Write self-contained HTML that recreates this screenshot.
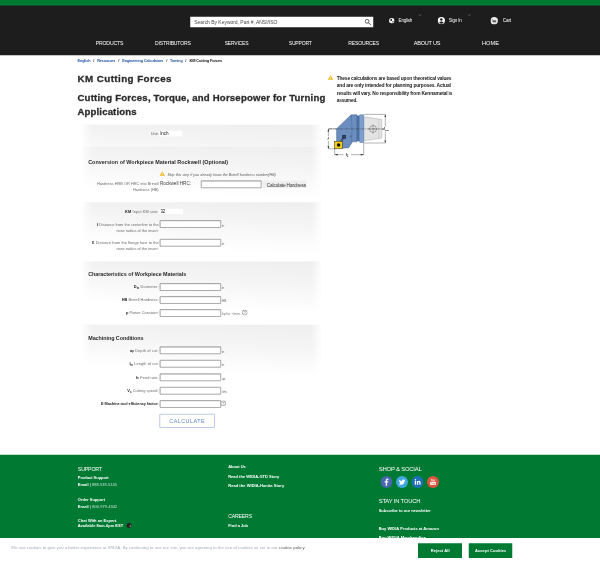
<!DOCTYPE html>
<html><head><meta charset="utf-8"><title>KM Cutting Forces</title>
<style>
html,body{margin:0;padding:0;background:#fff;}
body{width:600px;height:564px;overflow:hidden;font-family:"Liberation Sans",sans-serif;}
#page{position:relative;width:600px;height:564px;overflow:hidden;zoom:4;transform:scale(0.25);transform-origin:0 0;}
#wrap{position:relative;width:600px;height:564px;overflow:hidden;will-change:transform;}
.t{position:absolute;white-space:nowrap;line-height:1;transform:translateY(-50%);}
.t sub{font-size:70%;vertical-align:baseline;position:relative;top:0.25em;line-height:0;}
.t sup{font-size:70%;vertical-align:baseline;position:relative;top:-0.35em;line-height:0;}
.b{position:absolute;box-sizing:border-box;}
.panel{position:absolute;left:83.3px;width:237px;background:linear-gradient(to right,rgba(255,255,255,.75) 0,rgba(255,255,255,0) 9px) 0 0/237px 100% no-repeat,linear-gradient(to left,rgba(255,255,255,.85) 0,rgba(255,255,255,0) 9px) 0 0/237px 100% no-repeat,linear-gradient(183deg,#eeeeee 0%,#f3f3f3 30%,#f9f9f9 58%,#ffffff 86%) 0 0/237px 50px no-repeat;}
.inp{position:absolute;box-sizing:border-box;height:7.5px;background:#fff;border:0.5px solid #5c5c5c;border-radius:0.6px;box-shadow:inset 0.35px 0.35px 0 0.1px #bdbdbd,inset -0.3px -0.3px 0 0 #e2e2e2;}
.sel{position:absolute;background:#fff;}
.soc{position:absolute;width:12px;height:12px;border-radius:50%;}

</style></head>
<body>
<div id="wrap"><div id="page">
<!-- header -->
<div class="b" style="left:0;top:0;width:600px;height:55.35px;background:#1d1d1d"></div>
<div class="b" style="left:0;top:0;width:600px;height:5.4px;background:#007a33"></div>
<div class="b" style="left:190.3px;top:16.8px;width:183px;height:10.4px;background:#fff"></div>
<!-- search icon -->
<svg class="b" style="left:364.6px;top:18.8px;width:6.4px;height:6.4px" viewBox="0 0 20 20"><circle cx="8" cy="8" r="6" fill="none" stroke="#333" stroke-width="2.4"/><path d="M12.5 12.5 L18.5 18.5" stroke="#333" stroke-width="2.8" stroke-linecap="round"/></svg>
<!-- globe -->
<svg class="b" style="left:388.9px;top:17.9px;width:5.6px;height:5.6px" viewBox="0 0 20 20"><circle cx="10" cy="10" r="9.6" fill="#fff"/><path d="M9 2.5 Q12 3.5 11 6 Q9 7.5 10.5 9.5 Q8.5 11.5 6.5 10 Q4 9.5 4.2 6.5 Q6 3.5 9 2.5 Z M13 10.5 Q16.5 10 16.8 12.5 Q15.5 16 12.8 16.8 Q11.5 14 13 10.5 Z M5 12.5 Q7.5 13 7.8 16.5 Q5.5 15.5 5 12.5 Z" fill="#1d1d1d"/></svg>
<!-- chevrons -->
<svg class="b" style="left:418.3px;top:14px;width:3.4px;height:2px" viewBox="0 0 10 6"><path d="M1 1 L5 5 L9 1" fill="none" stroke="#999" stroke-width="1.6"/></svg>
<svg class="b" style="left:467.6px;top:14px;width:3.4px;height:2px" viewBox="0 0 10 6"><path d="M1 1 L5 5 L9 1" fill="none" stroke="#999" stroke-width="1.6"/></svg>
<!-- user -->
<svg class="b" style="left:437.7px;top:17.1px;width:7.2px;height:7.2px" viewBox="0 0 20 20"><circle cx="10" cy="10" r="10" fill="#fff"/><circle cx="10" cy="7.2" r="3.4" fill="#1d1d1d"/><path d="M3.5 16 Q10 9.5 16.5 16 Q10 21 3.5 16 Z" fill="#1d1d1d"/></svg>
<!-- cart -->
<svg class="b" style="left:490.6px;top:17px;width:7.4px;height:7.4px" viewBox="0 0 20 20"><circle cx="10" cy="10" r="10" fill="#ececec"/><path d="M3.8 6.2 H5.6 L6.6 9.6" fill="none" stroke="#555" stroke-width="1.2"/><rect x="5.6" y="9.4" width="10" height="3.2" rx="0.6" fill="#2a2a2a"/><path d="M7 12.6 L7.6 14.4 H14.4" fill="none" stroke="#777" stroke-width="1"/><circle cx="8.4" cy="15.8" r="1" fill="#777"/><circle cx="13.6" cy="15.8" r="1" fill="#777"/></svg>

<!-- warning icon (right col) -->
<svg class="b" style="left:327.8px;top:74.8px;width:5.6px;height:5.2px" viewBox="0 0 20 18"><path d="M10 0.5 L19.5 17.5 H0.5 Z" fill="#f5b81f"/><rect x="9" y="6" width="2" height="6.5" fill="#fff"/><rect x="9" y="13.7" width="2" height="2" fill="#fff"/></svg>

<!-- panels -->
<div class="panel" style="top:124.8px;height:21.7px"></div>
<div class="panel" style="top:146.5px;height:50px"></div>
<div class="panel" style="top:202.2px;height:54px"></div>
<div class="panel" style="top:261.5px;height:58px"></div>
<div class="panel" style="top:324.8px;height:72px"></div>

<!-- selects -->
<div class="sel" style="left:159px;top:130.8px;width:23.3px;height:5.7px"></div>
<div class="sel" style="left:159.2px;top:208.7px;width:24px;height:5.2px"></div>

<!-- warning icon (form) -->
<svg class="b" style="left:159.6px;top:170.9px;width:5.6px;height:5px" viewBox="0 0 20 18"><path d="M10 0.5 L19.5 17.5 H0.5 Z" fill="#f5b81f"/><rect x="9" y="6" width="2" height="6.5" fill="#fff"/><rect x="9" y="13.7" width="2" height="2" fill="#fff"/></svg>

<!-- inputs -->
<div class="inp" style="left:201px;top:180.6px;width:60.4px"></div>
<div class="b" style="left:262.8px;top:180.5px;width:43.8px;height:7.6px;background:#efefef"></div>
<div class="inp" style="left:159.7px;top:220.2px;width:61.4px"></div>
<div class="inp" style="left:159.7px;top:239.1px;width:61.4px"></div>
<div class="inp" style="left:159.7px;top:283.2px;width:61.4px"></div>
<div class="inp" style="left:159.7px;top:296.3px;width:61.4px"></div>
<div class="inp" style="left:159.7px;top:309.2px;width:61.4px"></div>
<div class="inp" style="left:159.7px;top:346.4px;width:61.4px"></div>
<div class="inp" style="left:159.7px;top:360.1px;width:61.4px"></div>
<div class="inp" style="left:159.7px;top:373.5px;width:61.4px"></div>
<div class="inp" style="left:159.7px;top:387.1px;width:61.4px"></div>
<div class="inp" style="left:159.7px;top:400.2px;width:61.4px"></div>
<!-- help icons -->
<svg class="b" style="left:241.9px;top:309.7px;width:5.6px;height:5.6px" viewBox="0 0 20 20"><circle cx="10" cy="10" r="8.8" fill="#fff" stroke="#5e5e5e" stroke-width="1.9"/><path d="M7.3 8 Q7.3 5.3 10 5.3 Q12.7 5.3 12.7 7.7 Q12.7 9.3 10 10.6 V12.2" fill="none" stroke="#666" stroke-width="1.5"/><rect x="9.2" y="13.6" width="1.6" height="1.6" fill="#666"/></svg>
<svg class="b" style="left:220.5px;top:400.5px;width:5.6px;height:5.6px" viewBox="0 0 20 20"><circle cx="10" cy="10" r="8.8" fill="#fff" stroke="#5e5e5e" stroke-width="1.9"/><path d="M7.3 8 Q7.3 5.3 10 5.3 Q12.7 5.3 12.7 7.7 Q12.7 9.3 10 10.6 V12.2" fill="none" stroke="#666" stroke-width="1.5"/><rect x="9.2" y="13.6" width="1.6" height="1.6" fill="#666"/></svg>
<!-- calculate button -->
<div class="b" style="left:159.5px;top:414px;width:55.3px;height:13.7px;background:#fff;border:0.7px solid #7797cb;border-radius:0.6px"></div>

<!-- tool diagram -->
<svg class="b" style="left:326px;top:110px;width:70px;height:52px" viewBox="326 110 70 52">
<g fill="none" stroke="#555" stroke-width="0.45">
<!-- right dim box -->
<path d="M363.7 114.4 H385.3 M363.7 143 H385.3 M385.3 114.4 V126.6 M385.3 131.6 V143"/>
<!-- left dim -->
<path d="M328.4 128.8 H336.6 M328.4 148.8 H335 M328.4 128.8 V136.3 M328.4 141 V148.8"/>
<!-- bottom dim -->
<path d="M334.7 148.8 V155.4 M363.7 142.4 V155.4 M334.7 154.7 H343.5 M351 154.7 H363.7"/>
</g>
<g fill="#333" stroke="none">
<path d="M385.3 114.4 l-0.9 2.6 h1.8 z M385.3 143 l-0.9 -2.6 h1.8 z"/>
<path d="M328.4 128.8 l-0.9 2.6 h1.8 z M328.4 148.8 l-0.9 -2.6 h1.8 z"/>
<path d="M334.7 154.7 l3 -0.9 v1.8 z M363.7 154.7 l-3 -0.9 v1.8 z"/>
</g>
<!-- taper -->
<path d="M363.7 116.8 L381.8 119.4 V138.1 L363.7 140.7 Z" fill="#e3e3e3" stroke="#9a9a9a" stroke-width="0.4"/>
<path d="M378.8 119 V138.5" stroke="#b5b5b5" stroke-width="0.4" fill="none"/>
<circle cx="373" cy="129" r="3.4" fill="#ececec" stroke="#5a5a5a" stroke-width="0.5"/>
<path d="M368.6 129 H377.4 M373 124.6 V133.4" stroke="#5a5a5a" stroke-width="0.45" fill="none"/>
<!-- body -->
<path d="M336.6 128.8 L351.1 114.8 H357 V141.8 H352.6 L348.7 147.7 L342.4 148.2 V141.3 H336.6 Z" fill="#6b8ebf" stroke="#3f5b86" stroke-width="0.45" stroke-linejoin="round"/>
<path d="M351.3 115 Q352.6 128 351.6 142" stroke="#4a6a99" stroke-width="0.5" fill="none"/>
<rect x="356.8" y="115.6" width="2.8" height="25.6" fill="#4d6fa2"/>
<rect x="359.4" y="114.8" width="4.3" height="27.6" rx="0.8" fill="#7aa0cf" stroke="#46638f" stroke-width="0.45"/>
<!-- center line -->
<path d="M329 128.9 H382.5" stroke="#3d3d3d" stroke-width="0.5" stroke-dasharray="3 0.8 0.8 0.8" fill="none"/>
<!-- clamp -->
<path d="M338.8 144.6 L344 137.2" stroke="#26344d" stroke-width="1.8" stroke-linecap="round" fill="none"/>
<path d="M339.2 144.4 L343.8 137.6" stroke="#7f9fca" stroke-width="0.5" fill="none"/>
<rect x="342.2" y="135" width="3.8" height="3.8" rx="0.5" fill="#26344d"/>
<rect x="343.6" y="136.4" width="1" height="1" fill="#53698f"/>
<ellipse cx="350.8" cy="136.5" rx="0.5" ry="1.2" fill="#3f5a85"/>
<!-- insert -->
<rect x="334.7" y="141.3" width="7.7" height="7.5" fill="#f6cf12" stroke="#222" stroke-width="0.5"/>
<circle cx="338.6" cy="144.9" r="1.75" fill="#111"/>
<!-- labels -->
<g font-family="Liberation Sans, sans-serif" fill="#222" font-style="italic" font-weight="bold">
<text x="327.4" y="140.1" font-size="3.8">f</text>
<text x="345.8" y="156.2" font-size="4">l<tspan font-size="2.6" dy="0.7">1</tspan></text>
<text x="382.2" y="130.3" font-size="4.2">d<tspan font-size="2.4" dy="0.7">MM</tspan></text>
</g>
</svg>

<!-- footer -->
<div class="b" style="left:0;top:454.8px;width:600px;height:110px;background:#007a33"></div>
<svg class="b" style="left:380.5px;top:476px;width:12px;height:12px" viewBox="0 0 24 24"><circle cx="12" cy="12" r="12" fill="#4967ad"/><path d="M13.2 19.5 V12.9 H15.4 L15.8 10.3 H13.2 V8.8 Q13.2 7.6 14.5 7.6 H15.9 V5.3 Q15 5.1 13.9 5.1 Q10.5 5.1 10.5 8.5 V10.3 H8.3 V12.9 H10.5 V19.5 Z" fill="#fff"/></svg>
<svg class="b" style="left:395.9px;top:476px;width:12px;height:12px" viewBox="0 0 24 24"><circle cx="12" cy="12" r="12" fill="#41a8dd"/><path d="M18.8 8.2 Q18.1 8.5 17.3 8.6 Q18.1 8.1 18.4 7.2 Q17.6 7.7 16.7 7.9 Q15.9 7 14.7 7 Q12.4 7 12.1 9.3 Q12.1 9.7 12.2 10 Q8.8 9.8 6.6 7.3 Q5.5 9.4 7.4 10.9 Q6.7 10.9 6.1 10.6 Q6.2 12.7 8.3 13.3 Q7.7 13.5 7.1 13.4 Q7.7 15.1 9.6 15.2 Q7.9 16.5 5.6 16.3 Q7.5 17.5 9.7 17.5 Q13.6 17.5 15.9 14.4 Q17.5 12 17.4 9.6 Q18.2 9 18.8 8.2 Z" fill="#fff"/></svg>
<svg class="b" style="left:411.5px;top:476px;width:12px;height:12px" viewBox="0 0 24 24"><circle cx="12" cy="12" r="12" fill="#1e70b6"/><rect x="6.6" y="9.8" width="2.5" height="7.6" fill="#fff"/><circle cx="7.85" cy="7.3" r="1.5" fill="#fff"/><path d="M10.8 9.8 H13.2 V10.9 Q14 9.6 15.6 9.6 Q18.2 9.6 18.2 12.7 V17.4 H15.7 V13.2 Q15.7 11.8 14.6 11.8 Q13.3 11.8 13.3 13.3 V17.4 H10.8 Z" fill="#fff"/></svg>
<svg class="b" style="left:427px;top:476px;width:12px;height:12px" viewBox="0 0 24 24"><circle cx="12" cy="12" r="12" fill="#d9553f"/><rect x="6.3" y="11.6" width="11.4" height="6.6" rx="1.6" fill="#fff"/><path d="M8 5.4 L9.2 8 L10.4 5.4 M9.2 8 V10.4 M12 7.2 a1 1.3 0 1 0 0.01 0 M14 6.8 V9.4 Q14.8 10.4 15.8 9.4 V6.8" stroke="#fff" stroke-width="1" fill="none"/><path d="M8.3 13.2 H10.5 M9.4 13.2 V16.8 M11.6 14.2 V16.2 Q12.3 17 13 16.2 V14.2 M14.4 13 V16.8 M14.4 14.6 Q15.8 13.8 15.8 15.6 Q15.8 17.3 14.4 16.5" stroke="#d9553f" stroke-width="0.8" fill="none"/></svg>
<!-- chat icon -->
<svg class="b" style="left:126.2px;top:522.8px;width:5.6px;height:5.6px" viewBox="0 0 20 20"><circle cx="10" cy="10" r="9" fill="#222"/><path d="M13.5 6.5 Q17 8 15.5 12 L16.5 15 L13.5 13.8 Q11 14 10.5 12" fill="none" stroke="#fff" stroke-width="1.1"/></svg>

<!-- cookie bar -->
<div class="b" style="left:0;top:538px;width:600px;height:26px;background:#fff"></div>
<div class="b" style="left:418px;top:543.3px;width:44px;height:14.7px;background:#007a33"></div>
<div class="b" style="left:468.7px;top:543.3px;width:43.6px;height:14.7px;background:#007a33"></div>

<span class="t" id="t0" style="top:21.90px;font-size:5.00px;color:#4a4a4a;letter-spacing:-0.029px;left:194.20px;">Search By Keyword, Part #, ANSI/ISO</span>
<span class="t" id="t1" style="top:20.90px;font-size:4.48px;color:#fff;letter-spacing:-0.155px;left:398.60px;">English</span>
<span class="t" id="t2" style="top:20.90px;font-size:4.53px;color:#fff;letter-spacing:-0.157px;left:448.70px;">Sign In</span>
<span class="t" id="t3" style="top:20.90px;font-size:4.74px;color:#fff;letter-spacing:-0.161px;left:502.70px;">Cart</span>
<span class="t" id="t4" style="top:43.10px;font-size:5.17px;color:#fff;letter-spacing:-0.175px;left:95.70px;">PRODUCTS</span>
<span class="t" id="t5" style="top:43.10px;font-size:5.09px;color:#fff;letter-spacing:-0.175px;left:155.00px;">DISTRIBUTORS</span>
<span class="t" id="t6" style="top:43.10px;font-size:4.96px;color:#fff;letter-spacing:-0.173px;left:224.70px;">SERVICES</span>
<span class="t" id="t7" style="top:43.10px;font-size:5.03px;color:#fff;letter-spacing:-0.174px;left:288.70px;">SUPPORT</span>
<span class="t" id="t8" style="top:43.10px;font-size:5.10px;color:#fff;letter-spacing:-0.177px;left:348.30px;">RESOURCES</span>
<span class="t" id="t9" style="top:43.10px;font-size:5.52px;color:#fff;letter-spacing:-0.190px;left:413.70px;">ABOUT US</span>
<span class="t" id="t10" style="top:43.10px;font-size:5.60px;color:#fff;letter-spacing:0.051px;left:482.00px;">HOME</span>
<span class="t" id="t11" style="top:60.40px;font-size:3.83px;color:#1c4f9e;font-weight:700;letter-spacing:-0.133px;left:77.50px;">English</span>
<span class="t" id="t12" style="top:60.40px;font-size:4.10px;color:#333;font-weight:700;left:93.30px;">/</span>
<span class="t" id="t13" style="top:60.40px;font-size:3.77px;color:#1c4f9e;font-weight:700;letter-spacing:-0.131px;left:97.20px;">Resources</span>
<span class="t" id="t14" style="top:60.40px;font-size:4.10px;color:#333;font-weight:700;left:118.30px;">/</span>
<span class="t" id="t15" style="top:60.40px;font-size:3.83px;color:#1c4f9e;font-weight:700;letter-spacing:-0.132px;left:122.30px;">Engineering Calculators</span>
<span class="t" id="t16" style="top:60.40px;font-size:4.10px;color:#333;font-weight:700;left:166.30px;">/</span>
<span class="t" id="t17" style="top:60.40px;font-size:3.67px;color:#1c4f9e;font-weight:700;letter-spacing:-0.126px;left:170.00px;">Turning</span>
<span class="t" id="t18" style="top:60.40px;font-size:4.10px;color:#333;font-weight:700;left:185.30px;">/</span>
<span class="t" id="t19" style="top:60.40px;font-size:3.92px;color:#111;font-weight:700;letter-spacing:-0.137px;left:189.50px;">KM Cutting Forces</span>
<span class="t" id="t20" style="top:78.50px;font-size:9.80px;color:#2b2b2b;font-weight:700;-webkit-text-stroke:0.3px #2b2b2b;letter-spacing:0.430px;left:77.50px;">KM Cutting Forces</span>
<span class="t" id="t21" style="top:98.00px;font-size:9.60px;color:#2b2b2b;font-weight:700;-webkit-text-stroke:0.3px #2b2b2b;letter-spacing:0.190px;left:77.50px;">Cutting Forces, Torque, and Horsepower for Turning</span>
<span class="t" id="t22" style="top:111.50px;font-size:9.60px;color:#2b2b2b;font-weight:700;-webkit-text-stroke:0.3px #2b2b2b;letter-spacing:0.134px;left:77.50px;">Applications</span>
<span class="t" id="t23" style="top:78.70px;font-size:4.87px;color:#222;font-weight:700;letter-spacing:-0.168px;left:336.70px;">These calculations are based upon theoretical values</span>
<span class="t" id="t24" style="top:85.80px;font-size:4.97px;color:#222;font-weight:700;letter-spacing:-0.173px;left:336.70px;">and are only intended for planning purposes. Actual</span>
<span class="t" id="t25" style="top:93.00px;font-size:4.87px;color:#222;font-weight:700;letter-spacing:-0.169px;left:336.70px;">results will vary. No responsibility from Kennametal is</span>
<span class="t" id="t26" style="top:100.10px;font-size:4.75px;color:#222;font-weight:700;letter-spacing:-0.164px;left:336.70px;">assumed.</span>
<span class="t" id="t27" style="top:133.90px;font-size:4.00px;color:#666;letter-spacing:-0.105px;right:441.51px;">Unit:</span>
<span class="t" id="t28" style="top:133.60px;font-size:4.60px;color:#222;letter-spacing:-0.123px;left:160.20px;">Inch</span>
<span class="t" id="t29" style="top:161.70px;font-size:5.40px;color:#2b2b2b;font-weight:700;letter-spacing:0.023px;left:88.20px;">Conversion of Workpiece Material Rockwell (Optional)</span>
<span class="t" id="t30" style="top:174.70px;font-size:3.50px;color:#555;font-style:italic;letter-spacing:0.070px;left:167.50px;">Skip this step if you already know the Brinell hardness number(HB)</span>
<span class="t" id="t31" style="top:183.80px;font-size:3.90px;color:#6c6c6c;letter-spacing:-0.001px;right:441.40px;">Hardness HRB OR HRC into Brinell</span>
<span class="t" id="t32" style="top:189.70px;font-size:3.90px;color:#6c6c6c;letter-spacing:-0.014px;right:441.41px;">Hardness (HB)</span>
<span class="t" id="t33" style="top:183.30px;font-size:4.70px;color:#444;letter-spacing:-0.044px;left:160.00px;">Rockwell HRC:</span>
<span class="t" id="t34" style="top:185.10px;font-size:4.80px;color:#333;letter-spacing:-0.142px;left:266.70px;">Calculate Hardness</span>
<span class="t" id="t35" style="top:211.20px;font-size:3.90px;color:#6c6c6c;letter-spacing:0.091px;right:441.51px;"><b style="color:#222">KM</b> Input KM size:</span>
<span class="t" id="t36" style="top:211.90px;font-size:4.51px;color:#222;letter-spacing:-0.158px;left:160.50px;">32</span>
<span class="t" id="t37" style="top:224.30px;font-size:3.90px;color:#6c6c6c;letter-spacing:-0.002px;right:441.40px;"><b style="color:#222">f</b> Distance from the centerline to the</span>
<span class="t" id="t38" style="top:230.20px;font-size:3.90px;color:#6c6c6c;letter-spacing:-0.019px;right:441.42px;">nose radius of the insert:</span>
<span class="t" id="t39" style="top:242.30px;font-size:3.90px;color:#6c6c6c;letter-spacing:0.038px;right:441.36px;"><b style="color:#222">l<sub>1</sub></b> Distance from the flange face to the</span>
<span class="t" id="t40" style="top:248.80px;font-size:3.90px;color:#6c6c6c;letter-spacing:-0.019px;right:441.42px;">nose radius of the insert:</span>
<span class="t" id="t41" style="top:225.80px;font-size:3.20px;color:#6c6c6c;letter-spacing:-0.096px;left:222.00px;">in</span>
<span class="t" id="t42" style="top:244.30px;font-size:3.20px;color:#6c6c6c;letter-spacing:-0.096px;left:222.00px;">in</span>
<span class="t" id="t43" style="top:274.10px;font-size:5.40px;color:#2b2b2b;font-weight:700;letter-spacing:-0.032px;left:88.20px;">Characteristics of Workpiece Materials</span>
<span class="t" id="t44" style="top:287.00px;font-size:3.90px;color:#6c6c6c;letter-spacing:0.139px;right:441.26px;"><b style="color:#222">D<sub>m</sub></b> Diameter:</span>
<span class="t" id="t45" style="top:300.00px;font-size:3.90px;color:#6c6c6c;letter-spacing:0.030px;right:441.37px;"><b style="color:#222">HB</b> Brinell Hardness:</span>
<span class="t" id="t46" style="top:313.00px;font-size:3.90px;color:#6c6c6c;letter-spacing:0.018px;right:441.38px;"><b style="color:#222">p</b> Power Constant:</span>
<span class="t" id="t47" style="top:288.60px;font-size:3.20px;color:#6c6c6c;letter-spacing:-0.096px;left:222.00px;">in</span>
<span class="t" id="t48" style="top:301.60px;font-size:3.20px;color:#6c6c6c;letter-spacing:-0.023px;left:222.00px;">HB</span>
<span class="t" id="t49" style="top:314.30px;font-size:3.20px;color:#6c6c6c;letter-spacing:0.274px;left:222.00px;">hp/in.<sup>3</sup>/min.</span>
<span class="t" id="t50" style="top:337.90px;font-size:5.40px;color:#2b2b2b;font-weight:700;letter-spacing:-0.054px;left:88.20px;">Machining Conditions</span>
<span class="t" id="t51" style="top:350.30px;font-size:3.90px;color:#6c6c6c;letter-spacing:0.111px;right:441.29px;"><b style="color:#222">a<sub>p</sub></b> Depth of cut:</span>
<span class="t" id="t52" style="top:363.80px;font-size:3.90px;color:#6c6c6c;letter-spacing:0.057px;right:441.34px;"><b style="color:#222">l<sub>m</sub></b> Length of cut:</span>
<span class="t" id="t53" style="top:377.20px;font-size:3.90px;color:#6c6c6c;letter-spacing:0.067px;right:441.33px;"><b style="color:#222">f<sub>n</sub></b> Feed rate:</span>
<span class="t" id="t54" style="top:390.70px;font-size:3.90px;color:#6c6c6c;letter-spacing:0.062px;right:441.34px;"><b style="color:#222">V<sub>c</sub></b> Cutting speed:</span>
<span class="t" id="t55" style="top:403.50px;font-size:3.80px;color:#222;font-weight:700;letter-spacing:-0.019px;right:441.42px;">E Machine tool efficiency factor:</span>
<span class="t" id="t56" style="top:351.80px;font-size:3.20px;color:#6c6c6c;letter-spacing:-0.096px;left:222.00px;">in</span>
<span class="t" id="t57" style="top:365.30px;font-size:3.20px;color:#6c6c6c;letter-spacing:-0.096px;left:222.00px;">in</span>
<span class="t" id="t58" style="top:378.80px;font-size:3.20px;color:#6c6c6c;letter-spacing:0.008px;left:222.00px;">ipr.</span>
<span class="t" id="t59" style="top:392.20px;font-size:2.97px;color:#6c6c6c;letter-spacing:-0.102px;left:222.00px;">sfm.</span>
<span class="t" id="t60" style="top:420.70px;font-size:5.40px;color:#5f86c4;letter-spacing:0.478px;left:169.30px;">CALCULATE</span>
<span class="t" id="t61" style="top:468.90px;font-size:5.27px;color:#fff;letter-spacing:-0.183px;left:77.80px;">SUPPORT</span>
<span class="t" id="t62" style="top:477.60px;font-size:4.00px;color:#fff;font-weight:700;letter-spacing:-0.050px;left:77.80px;">Product Support</span>
<span class="t" id="t63" style="top:484.60px;font-size:4.00px;color:#fff;letter-spacing:0.040px;left:77.80px;"><b>Email</b> | <span style="opacity:.8">888.539.5145</span></span>
<span class="t" id="t64" style="top:499.30px;font-size:4.00px;color:#fff;font-weight:700;letter-spacing:-0.010px;left:77.80px;">Order Support</span>
<span class="t" id="t65" style="top:506.50px;font-size:4.00px;color:#fff;letter-spacing:0.055px;left:77.80px;"><b>Email</b> | <span style="opacity:.8">800.979.4342</span></span>
<span class="t" id="t66" style="top:520.60px;font-size:4.00px;color:#fff;font-weight:700;letter-spacing:0.016px;left:77.80px;">Chat With an Expert.</span>
<span class="t" id="t67" style="top:526.00px;font-size:4.00px;color:#fff;font-weight:700;letter-spacing:0.020px;left:77.80px;">Available 8am-6pm EST</span>
<span class="t" id="t68" style="top:466.60px;font-size:4.00px;color:#fff;font-weight:700;letter-spacing:-0.035px;left:228.20px;">About Us</span>
<span class="t" id="t69" style="top:476.40px;font-size:4.00px;color:#fff;font-weight:700;letter-spacing:0.005px;left:228.20px;">Read the WIDIA-GTD Story</span>
<span class="t" id="t70" style="top:485.20px;font-size:4.00px;color:#fff;font-weight:700;letter-spacing:0.049px;left:228.20px;">Read the WIDIA-Hanita Story</span>
<span class="t" id="t71" style="top:516.80px;font-size:5.16px;color:#fff;letter-spacing:-0.176px;left:228.20px;">CAREERS</span>
<span class="t" id="t72" style="top:525.50px;font-size:4.00px;color:#fff;font-weight:700;letter-spacing:-0.020px;left:228.20px;">Find a Job</span>
<span class="t" id="t73" style="top:468.90px;font-size:5.91px;color:#fff;letter-spacing:-0.202px;left:378.70px;">SHOP &amp; SOCIAL</span>
<span class="t" id="t74" style="top:501.60px;font-size:5.89px;color:#fff;letter-spacing:-0.205px;left:378.70px;">STAY IN TOUCH</span>
<span class="t" id="t75" style="top:510.80px;font-size:4.00px;color:#fff;font-weight:700;letter-spacing:-0.025px;left:378.70px;">Subscribe to our newsletter</span>
<span class="t" id="t76" style="top:528.80px;font-size:4.00px;color:#fff;font-weight:700;letter-spacing:0.013px;left:378.70px;">Buy WIDIA Products at Amazon</span>
<span class="t" id="t77" style="top:537.40px;font-size:4.00px;color:#fff;font-weight:700;letter-spacing:0.054px;left:378.70px;">Buy WIDIA Merchandise</span>
<span class="t" id="t78" style="top:547.40px;font-size:4.30px;color:#a3abb5;letter-spacing:0.012px;left:11.00px;">We use cookies to give you a better experience at WIDIA. By continuing to use our site, you are agreeing to the use of cookies as set in our</span>
<span class="t" id="t79" style="top:547.40px;font-size:4.30px;color:#555;letter-spacing:0.084px;left:279.00px;">cookie policy</span>
<span class="t" id="t80" style="top:550.70px;font-size:4.00px;color:#fff;font-weight:700;letter-spacing:0.092px;left:430.70px;">Reject All</span>
<span class="t" id="t81" style="top:550.70px;font-size:4.00px;color:#fff;font-weight:700;letter-spacing:0.092px;left:475.00px;">Accept Cookies</span>
</div></div>
</body></html>
